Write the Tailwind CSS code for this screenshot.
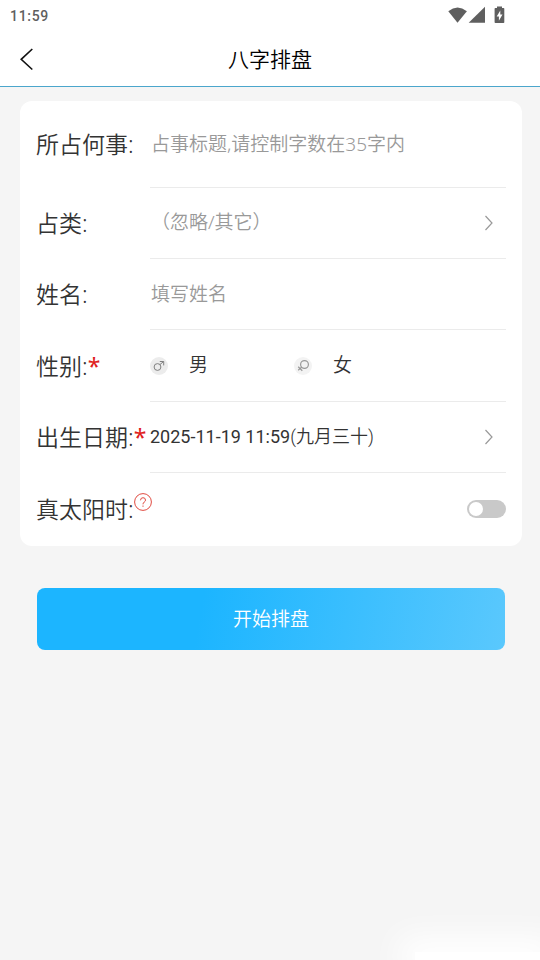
<!DOCTYPE html>
<html lang="zh-CN">
<head>
<meta charset="utf-8">
<meta name="viewport" content="width=device-width, initial-scale=1">
<title>八字排盘</title>
<script src="https://cdn.jsdelivr.net/npm/@tailwindcss/browser@4"></script>
</head>
<body class="relative min-h-screen overflow-x-hidden bg-[#f5f5f5] font-['Noto_Sans','Noto_Sans_CJK_SC',sans-serif] font-[350] text-[#333]">
<header class="border-b border-[#4ba6cc] bg-white">
  <div class="flex h-8 items-center justify-between pr-[35px] pl-[10px] text-[#5f5f5f]">
    <time class="font-[Roboto,sans-serif] text-[14px] font-medium tracking-wider">11:59</time>
    <svg class="h-[18px] w-[57px] -translate-y-px" viewBox="0 0 57 18" fill="currentColor" aria-hidden="true">
      <path d="M0.300 5.200Q9.500-2.200 18.900 5.200L9.500 16.700z"/>
      <path d="M37 .7V16.700H20.700z"/>
      <path d="M49 .5h5v1.500h1.500q.8 0 .8.8v13.400q0 .8-.8.8h-8.100q-.8 0-.8-.8V2.800q0-.8.8-.8H49z"/>
      <path d="M52.300 4.500v4h2.200l-3.600 6.300v-4.300h-2.200z" fill="#fff"/>
    </svg>
  </div>
  <div class="grid h-[54px] grid-cols-[48px_1fr_48px] items-center">
    <button type="button" aria-label="返回" class="flex h-full items-center pl-[19px]">
      <svg class="h-6 w-4" viewBox="0 0 16 24" fill="none" stroke="#111" stroke-width="1.600" aria-hidden="true"><path d="M13.300 2 2.200 12.300 13.300 22.500"/></svg>
    </button>
    <h1 class="pt-[2px] text-center text-[21px] font-[350] text-black">八字排盘</h1>
  </div>
</header>
<main>
  <form>
    <div class="mt-[14px] mr-[18px] ml-5 rounded-xl bg-white px-4">
      <div class="flex h-[87px]">
        <label for="topic" class="flex w-[114px] shrink-0 items-center text-[23px] whitespace-nowrap">所占何事:</label>
        <input id="topic" type="text" maxlength="35" placeholder="占事标题,请控制字数在35字内" class="min-w-0 flex-1 border-b border-[#ebebeb] pl-px text-[19px] outline-none placeholder:text-[#999]">
      </div>
      <div class="flex h-[71px]">
        <label for="kind" class="flex w-[114px] shrink-0 items-center text-[23px] whitespace-nowrap">占类:</label>
        <div class="flex min-w-0 flex-1 items-center border-b border-[#ebebeb] pr-3">
          <select id="kind" class="h-full min-w-0 flex-1 appearance-none pb-[2px] pl-px text-[19px] text-[#999] outline-none"><option>（忽略/其它）</option></select>
          <svg class="h-4 w-[10px]" viewBox="0 0 10 16" fill="none" stroke="#999" stroke-width="1.200" aria-hidden="true"><path d="M1.500 1 8 8 1.500 15"/></svg>
        </div>
      </div>
      <div class="flex h-[71px]">
        <label for="name" class="flex w-[114px] shrink-0 items-center text-[23px] whitespace-nowrap">姓名:</label>
        <input id="name" type="text" placeholder="填写姓名" class="min-w-0 flex-1 border-b border-[#ebebeb] pl-px text-[19px] outline-none placeholder:text-[#999]">
      </div>
      <div class="flex h-[72px]" role="radiogroup" aria-labelledby="gender">
        <div id="gender" class="flex w-[114px] shrink-0 items-center text-[23px] whitespace-nowrap">性别:<span class="font-normal text-[#e02020]">*</span></div>
        <div class="flex min-w-0 flex-1 items-center border-b border-[#ebebeb]">
          <label class="flex w-36 items-center gap-[21px] text-[19px]">
            <input type="radio" name="gender" class="sr-only">
            <svg class="size-[18px]" viewBox="0 0 18 18" fill="none" stroke="#808080" aria-hidden="true"><circle cx="9" cy="9" r="9" fill="#ececec" stroke="none"/><circle cx="7.500" cy="10" r="3.400"/><path d="M9.900 7.600 13.500 4.600M9.800 4.500h3.900v3.900"/></svg>
            男
          </label>
          <label class="flex w-36 items-center gap-[21px] text-[19px]">
            <input type="radio" name="gender" class="sr-only">
            <svg class="size-[18px]" viewBox="0 0 18 18" fill="none" stroke="#999" aria-hidden="true"><circle cx="9" cy="9" r="9" fill="#f3f3f3" stroke="none"/><circle cx="10.500" cy="7.500" r="3.900" stroke-width="1.200"/><path d="M7.800 10 4.200 13.200M4.200 9.800 8.300 13.700" stroke-width="1.200"/></svg>
            女
          </label>
        </div>
      </div>
      <div class="flex h-[71px]">
        <label for="birth" class="flex w-[114px] shrink-0 items-center text-[23px] whitespace-nowrap">出生日期:<span class="font-normal text-[#e02020]">*</span></label>
        <button id="birth" type="button" class="flex min-w-0 flex-1 items-center justify-between border-b border-[#ebebeb] pr-3 font-[Roboto,'Noto_Sans_CJK_SC',sans-serif] text-[18px]">
          <span class="pb-[2px]"><span class="font-normal">2025-11-19 11:59</span>(九月三十)</span>
          <svg class="h-4 w-[10px]" viewBox="0 0 10 16" fill="none" stroke="#999" stroke-width="1.200" aria-hidden="true"><path d="M1.500 1 8 8 1.500 15"/></svg>
        </button>
      </div>
      <div class="flex h-[73px] items-center">
        <label for="solar" class="text-[23px] whitespace-nowrap">真太阳时:</label>
        <button type="button" aria-label="真太阳时说明" class="mb-4">
          <svg class="size-[18px]" viewBox="0 0 18 18" fill="none" stroke="#e04a40" aria-hidden="true"><circle cx="9" cy="9" r="8.400"/><path d="M6.500 7.300Q6.500 4.700 9 4.700T11.500 7.100Q11.500 8.300 10.200 9.100 9 9.900 9 11.300M9 12.500v1.300"/></svg>
        </button>
        <input id="solar" type="checkbox" role="switch" class="mb-px ml-auto h-[18px] w-[39px] appearance-none rounded-full bg-[#c9c9c9] p-[2px] before:block before:size-[14px] before:rounded-full before:bg-white checked:bg-[#1cb5ff] checked:before:ml-auto">
      </div>
    </div>
    <div class="mt-[42px] mr-[35px] ml-[37px]">
      <button type="submit" class="h-[62px] w-full rounded-lg bg-linear-[100deg,#1cb5ff_35%,#5ac8fd] text-[19px] text-white">开始排盘</button>
    </div>
  </form>
</main>
<div class="pointer-events-none absolute right-0 bottom-0 h-2 w-[125px] bg-white shadow-[0_0_32px_16px_#fff]" aria-hidden="true"></div>
</body>
</html>
